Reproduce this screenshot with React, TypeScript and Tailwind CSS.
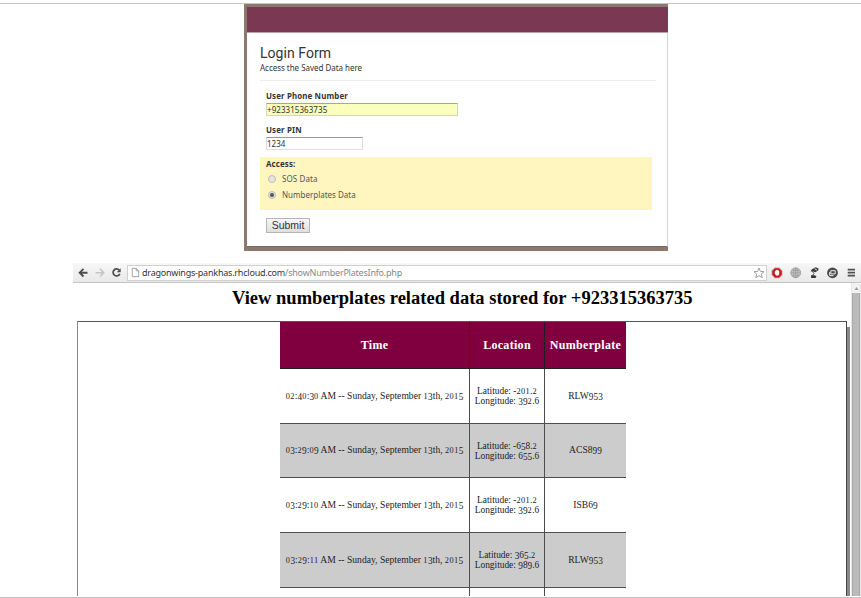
import React from "react";

const rows = [
  { time: "02:40:30 AM -- Sunday, September 13th, 2015", lat: "Latitude: -201.2", lon: "Longitude: 392.6", plate: "RLW953", shaded: false },
  { time: "03:29:09 AM -- Sunday, September 13th, 2015", lat: "Latitude: -658.2", lon: "Longitude: 655.6", plate: "ACS899", shaded: true },
  { time: "03:29:10 AM -- Sunday, September 13th, 2015", lat: "Latitude: -201.2", lon: "Longitude: 392.6", plate: "ISB69", shaded: false },
  { time: "03:29:11 AM -- Sunday, September 13th, 2015", lat: "Latitude: 365.2", lon: "Longitude: 989.6", plate: "RLW953", shaded: true },
];

// Sets digits in old style: 0-2 shorter, 3, 4, 5, 7 and 9 hanging below the baseline.
function OldStyle({ text }: { text: string }) {
  return (
    <span>
      {text.split(/([012]+|[34579]+)/).map((part, i) => {
        if (/^[012]+$/.test(part)) return <span key={i} className="text-[8.3px] leading-none tracking-[0.4px]">{part}</span>;
        if (/^[34579]+$/.test(part)) return <span key={i} className="align-[-1px] text-[9.3px] leading-none">{part}</span>;
        return part;
      })}
    </span>
  );
}

function LoginPanel() {
  return (
    <section className="ml-[244px] h-[247px] w-[424px] bg-[#8c786f] pt-[3px] pl-[3px] font-['Noto_Sans',sans-serif] text-[#333]">
      <div className="h-[240px] w-[421px] border-r border-b border-r-[#d4d4d4] border-b-[#776860] bg-white">
        <div className="h-[26px] w-[421px] border-b border-[#bc9dab] bg-[#7a3852]" />
        <div className="ml-[13px] h-[48px] w-[396px] border-b border-[#ececec] pt-[12px]">
          <h1 className="h-[17px] font-['Roboto',sans-serif] text-[14px] leading-[17px] tracking-[0.05px] whitespace-nowrap text-[#333]">Login Form</h1>
          <p className="h-[11px] text-[8px] leading-[11px] tracking-[-0.03px] whitespace-nowrap">Access the Saved Data here</p>
        </div>
        <form className="ml-[13px] w-[392px]">
          <div className="pt-[9px] pl-[6px]">
            <label className="block h-[13px] text-[7.9px] leading-[13px] font-bold tracking-[0.14px] whitespace-nowrap">User Phone Number</label>
            <div className="h-[13px] w-[192px] border border-[#d5d5bb] border-t-[#a8a88d] bg-[#faffbd] text-[8px] leading-[11px] tracking-[0.06px] text-[#333]">+923315363735</div>
            <label className="mt-[8px] block h-[13px] text-[7.9px] leading-[12px] font-bold tracking-[0.14px] whitespace-nowrap">User PIN</label>
            <div className="h-[13px] w-[97px] border border-[#ddd] border-t-[#999] bg-white text-[8px] leading-[11px]">1234</div>
          </div>
          <fieldset className="mt-[7px] h-[53px] bg-[#fff5bf] pt-px pl-[6px]">
            <legend className="float-left h-[12px] w-full text-[7.9px] leading-[12px] font-bold tracking-[0.12px]">Access:</legend>
            <div className="clear-both flex h-[17px] items-center pl-[2px]">
              <i className="size-[8px] rounded-full border border-[#bbb] bg-[#e7e5df]" />
              <span className="ml-[6px] text-[8px] tracking-[0.1px] text-[#555]">SOS Data</span>
            </div>
            <div className="flex h-[16px] items-center pl-[2px]">
              <i className="flex size-[8px] items-center justify-center rounded-full border border-[#bbb] bg-[#e0dfdc]"><b className="size-[4px] rounded-full bg-[#555]" /></i>
              <span className="ml-[6px] text-[8px] text-[#555]">Numberplates Data</span>
            </div>
          </fieldset>
          <button type="button" className="mt-[8px] ml-[6px] block h-[15px] w-[44px] border border-[#b5b5b5] bg-linear-to-b from-[#f7f7f7] to-[#dedede] font-['Liberation_Sans',sans-serif] text-[10.5px] leading-[13px] text-[#333]">Submit</button>
        </form>
      </div>
    </section>
  );
}

function BrowserBar() {
  return (
    <div className="ml-[73px] flex h-[20px] items-center border-b border-[#c4c4c4] bg-linear-to-b from-[#f7f7f7] to-[#e9e9e9]">
      <svg className="ml-[5px] h-[18px] w-[46px] shrink-0" viewBox="0 0 46 18" fill="none" strokeWidth="1.9">
        <path d="M9.5 8.7H1.8M5.5 4.9L1.7 8.7L5.5 12.5" stroke="#4d4d4d" />
        <path d="M17.5 8.7h8M22 4.9L25.8 8.7l-3.8 3.8" stroke="#c5c5c5" strokeWidth="1.5" />
        <path d="M41.3 6.2A3.5 3.5 0 1 0 41.8 9.8" stroke="#4d4d4d" strokeWidth="1.7" />
        <path d="M42.7 4.3V8.3H38.7z" fill="#4d4d4d" />
      </svg>
      <div className="ml-[3px] flex h-[16px] w-[640px] shrink-0 items-center border border-[#d0d0d0] bg-white">
        <svg className="ml-[3px] h-[11px] w-[9px]" viewBox="0 0 9 12" fill="none" stroke="#999">
          <path d="M1 1.5h4.3L8 4.2v6.3H1zM5.3 1.5v2.7H8" />
        </svg>
        <div className="ml-[2px] font-['Noto_Sans',sans-serif] text-[9px] leading-[14px] tracking-[-0.215px] whitespace-nowrap text-[#333]">
          dragonwings-pankhas.rhcloud.com<span className="text-[#888]">/showNumberPlatesInfo.php</span>
        </div>
        <svg className="mr-px ml-auto size-[12px]" viewBox="0 0 12 12" fill="none" stroke="#888" strokeWidth=".8">
          <path d="M6 1L7.4 4.4L11 4.7L8.3 7L9.2 10.7L6 8.7L2.8 10.7L3.7 7L1 4.7L4.6 4.4z" />
        </svg>
      </div>
      <svg className="ml-[3px] h-[18px] w-[86px] shrink-0" viewBox="0 0 86 18" fill="none">
        <path d="M4.7 3.4h4.6L12.5 6.6V11l-3.2 3.2H4.7L1.5 11V6.6z" fill="#bba4a4" />
        <path d="M5.1 4.2h3.8l2.8 2.8v3.7l-2.8 2.8H5.1l-2.8-2.8V7z" fill="#d4151c" />
        <path d="M4.9 7.2l1-.8 1-.6 1.2.4 1.1.8v3.5L8 11.6H6.2L4.7 9.4z" fill="white" />
        <circle cx="25.7" cy="8.8" r="4.9" fill="#c8c8c8" stroke="#a1a1a1" />
        <path d="M21.2 8.8h9M25.7 4.1v9.4M22.2 6.4h7M22.2 11.2h7" stroke="#999" strokeWidth=".8" />
        <ellipse cx="25.7" cy="8.8" rx="2.2" ry="4.7" stroke="#999" strokeWidth=".7" />
        <path d="M40.5 7.3l1.4-2 3.8-2.1 2.9 1.4-.4 2-2.9 1.6-2.4-.8z" fill="#3f3f3f" />
        <path d="M44.7 4.7l2.1 1.3" stroke="white" strokeWidth=".9" />
        <path d="M41.7 6.7l2.3 2.7-1.5 2.4" stroke="#555" strokeWidth="1" />
        <path d="M41 11.2h3.5l2 1-1 1.7h-4.3z" fill="#333" />
        <circle cx="62.5" cy="8.8" r="5.4" fill="#4a4a4a" />
        <path d="M60.8 6.7h4.4v3.2h-4.4zM59.7 8v3.6h3.8" stroke="#ececec" strokeWidth="1" />
        <path d="M77.7 5.7h7.3M77.7 8.7h7.3M77.7 11.7h7.3" stroke="#505050" strokeWidth="1.7" />
      </svg>
    </div>
  );
}

function PlateTable() {
  return (
    <div className="ml-[201px] grid w-[346px] grid-cols-[190px_75px_81px] text-center font-['Liberation_Serif',serif] text-[9.6px] text-[#222]">
      {["Time", "Location", "Numberplate"].map((title, i) => (
        <div key={title} className={"flex h-[47px] items-center justify-center border-b border-[#202020] bg-[#80003f] text-[12px] font-bold tracking-[0.3px] text-white " + (i < 2 ? "border-r" : "")}>{title}</div>
      ))}
      {rows.map((row) => {
        const cell = "flex h-[54.7px] items-center justify-center border-b border-[#4d4d4d] whitespace-nowrap " + (row.shaded ? "bg-[#cccccc]" : "bg-white");
        return (
          <React.Fragment key={row.time}>
            <div className={cell + " border-r"}><OldStyle text={row.time} /></div>
            <div className={cell + " border-r text-[9.4px]"}>
              <div>
                <div className="h-[10px] leading-[10px]"><OldStyle text={row.lat} /></div>
                <div className="h-[10px] leading-[10px]"><OldStyle text={row.lon} /></div>
              </div>
            </div>
            <div className={cell}><OldStyle text={row.plate} /></div>
          </React.Fragment>
        );
      })}
      <div className="h-[10px] border-r border-[#4d4d4d]" />
      <div className="h-[10px] border-r border-[#4d4d4d]" />
      <div />
    </div>
  );
}

export default function App() {
  return (
    <main className="h-[598px] w-[861px] overflow-hidden bg-white">
      <div className="h-[4px] border-b border-[#c4c4c4]" />
      <LoginPanel />
      <div className="h-[12px]" />
      <BrowserBar />
      <div className="ml-[73px] flex h-[313px]">
        <div className="w-[778px] shrink-0">
          <h2 className="ml-[159px] h-[38px] pt-[4px] font-['Liberation_Serif',serif] text-[18.5px] leading-[22px] font-bold tracking-[0.01px] whitespace-nowrap text-black">View numberplates related data stored for +923315363735</h2>
          <div className="ml-[4px] flex h-[275px]">
            <div className="h-[275px] w-[770px] shrink-0 overflow-hidden rounded-tl-[1px] border-t border-r border-l border-t-[#555] border-r-[#444] border-l-[#888] pl-px">
              <PlateTable />
            </div>
            <div className="mt-[6px] w-[3px] bg-[#888]" />
          </div>
        </div>
        <div className="w-[10px] border-x border-[#e8e8e8] bg-[#f1f1f1]">
          <div className="flex h-[10px] items-center justify-center"><svg className="size-[5px]" viewBox="0 0 5 5"><path d="M.5 4L2.5 1L4.5 4z" fill="#999" /></svg></div>
          <div className="h-[303px] w-[8px] border-x border-[#aaa] bg-[#bbb]" />
        </div>
      </div>
      <div className="mt-px h-px bg-[#c4c4c4]" />
    </main>
  );
}
